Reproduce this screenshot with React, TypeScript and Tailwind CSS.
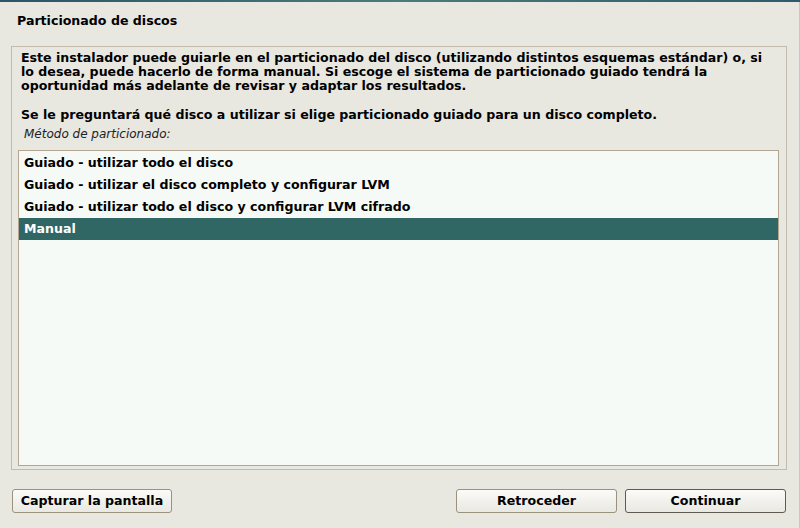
const options = [
	"Guiado - utilizar todo el disco",
	"Guiado - utilizar el disco completo y configurar LVM",
	"Guiado - utilizar todo el disco y configurar LVM cifrado",
	"Manual",
];

const App = () => {
	const selected = 3;

	return (
		<div
			className="w-[800px] h-[528px] flex flex-col bg-[#e8e7e0] text-black overflow-hidden"
			style={{ fontFamily: '"DejaVu Sans", sans-serif' }}
		>
			{/* desktop strip */}
			<div className="h-[2px] bg-gradient-to-r from-[#2b5468] via-[#4a7b7c] to-[#2f5a6c]" />

			<div className="flex-1 flex flex-col border-r border-[#c9c7bf]">
				<h1 className="pl-[17px] pt-[11px] h-[44px] text-[12.6px] font-bold leading-[16px]">
					Particionado de discos
				</h1>

				{/* main frame */}
				<div className="ml-[11px] mr-[12px] h-[424px] border border-[#c3bcae] flex flex-col">
					<div className="pl-[9px] pt-[4px] text-[12.6px] font-bold leading-[14px] whitespace-nowrap">
						<p>
							Este instalador puede guiarle en el particionado del disco (utilizando distintos esquemas estándar) o, si
							<br />
							lo desea, puede hacerlo de forma manual. Si escoge el sistema de particionado guiado tendrá la
							<br />
							oportunidad más adelante de revisar y adaptar los resultados.
						</p>
						<p className="mt-[15px]">
							Se le preguntará qué disco a utilizar si elige particionado guiado para un disco completo.
						</p>
					</div>
					<p className="pl-[12px] mt-[5px] text-[12px] italic leading-[14px] text-[#222]">
						Método de particionado:
					</p>

					{/* option list */}
					<div className="ml-[6px] mr-[7px] mt-[9px] h-[316px] pt-[1px] border border-[#b4a690] bg-[#f6faf6] flex flex-col">
						{options.map((option, index) => (
							<div
								key={option}
								className={
									index === selected
										? "h-[22px] pl-[5px] flex items-center text-[12.6px] font-bold text-white bg-[#306664]"
										: "h-[22px] pl-[5px] flex items-center text-[12.6px] font-bold"
								}
							>
								{option}
							</div>
						))}
					</div>
				</div>

				{/* buttons */}
				<div className="mt-[19px] pl-[12px] pr-[13px] flex items-center">
					<button className="w-[160px] h-[24px] rounded-[3px] border border-[#9a927f] bg-gradient-to-b from-[#fbfbf8] to-[#e9e8e2] text-[12.6px] font-bold">
						Capturar la pantalla
					</button>
					<div className="flex-1" />
					<button className="w-[161px] h-[24px] rounded-[3px] border border-[#9a927f] bg-gradient-to-b from-[#fbfbf8] to-[#e9e8e2] text-[12.6px] font-bold">
						Retroceder
					</button>
					<button className="ml-[8px] w-[161px] h-[24px] rounded-[3px] border border-[#615b4f] bg-gradient-to-b from-[#fbfbf8] to-[#e9e8e2] text-[12.6px] font-bold">
						Continuar
					</button>
				</div>
			</div>
		</div>
	);
};

export default App;
